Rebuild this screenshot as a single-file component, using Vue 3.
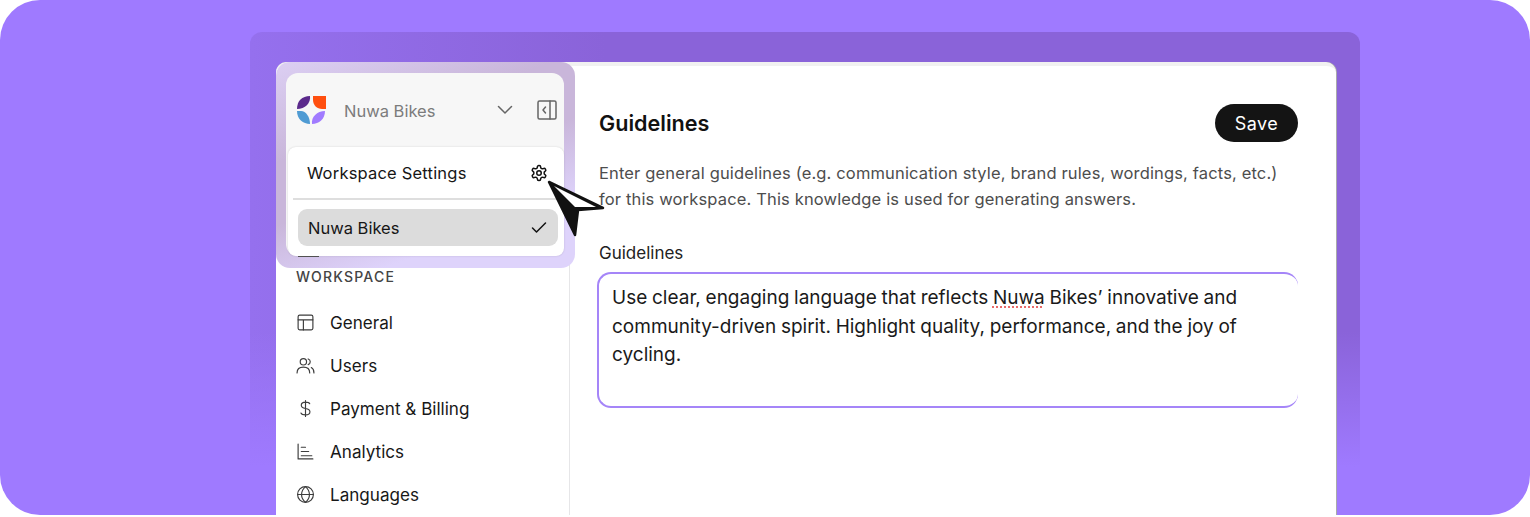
<template>
  <div class="stage">
    <div class="frame">
      <div class="window">
        <aside class="sidebar">
          <div class="side-head"></div>
          <div class="side-label">WORKSPACE</div>
          <nav class="side-nav">
            <div v-for="item in navItems" :key="item.label" class="nav-item">
              <svg class="nav-icon" viewBox="0 0 18 18" fill="none" stroke="#3d3d3d" stroke-width="1.1" stroke-linecap="round" stroke-linejoin="round" v-html="item.icon"></svg>
              <span>{{ item.label }}</span>
            </div>
          </nav>
        </aside>
        <main class="content">
          <div class="title-row">
            <h1>Guidelines</h1>
            <button class="save" type="button">Save</button>
          </div>
          <p class="hint">Enter general guidelines (e.g. communication style, brand rules, wordings, facts, etc.) for this workspace. This knowledge is used for generating answers.</p>
          <label class="field-label">Guidelines</label>
          <div class="editor">Use clear, engaging language that reflects <span class="typo">Nuwa</span> Bikes’ innovative and community-driven spirit. Highlight quality, performance, and the joy of cycling.</div>
        </main>
      </div>
    </div>

    <div class="highlight">
      <div class="peek"></div>
      <div class="switcher">
        <div class="brand-row">
          <svg class="logo" width="30" height="30" viewBox="0 0 30 30">
            <path d="M1 14C1 6 6 1 14 1 15 8 9 14 1 14z" fill="#5b2a8c" />
            <path d="M17 1H30V14H26C21 14 17 10 17 5z" fill="#ff4f0f" />
            <path d="M1 16H5C10 16 14 22 14 29 7 29 1 24 1 16z" fill="#4f9bd3" />
            <path d="M29 16C21 16 15 22 16 29 23 29 29 24 29 16z" fill="#a17bff" />
          </svg>
          <span class="brand-name">Nuwa Bikes</span>
          <svg class="chevron" width="16" height="10" viewBox="0 0 16 10" fill="none" stroke="#666" stroke-width="1.500" stroke-linecap="round" stroke-linejoin="round"><path d="M1.500 1.500 8 8l6.500-6.500" /></svg>
          <svg class="collapse" width="20" height="20" viewBox="0 0 20 20" fill="none" stroke="#666" stroke-width="1.500" stroke-linejoin="round" stroke-linecap="round"><rect x="1" y="1" width="18" height="18" rx="1.500" /><path d="M13 1v18M8.500 7 6 10l2.500 3" /></svg>
        </div>
        <div class="menu">
          <div class="menu-row">
            <span>Workspace Settings</span>
            <svg width="18" height="18" viewBox="0 0 24 24" fill="none" stroke="#111" stroke-width="2" stroke-linecap="round" stroke-linejoin="round"><path d="M12.220 2h-.44a2 2 0 0 0-2 2v.18a2 2 0 0 1-1 1.730l-.43.25a2 2 0 0 1-2 0l-.15-.08a2 2 0 0 0-2.730.73l-.22.38a2 2 0 0 0 .73 2.730l.15.1a2 2 0 0 1 1 1.720v.51a2 2 0 0 1-1 1.740l-.15.09a2 2 0 0 0-.73 2.730l.22.38a2 2 0 0 0 2.730.73l.15-.08a2 2 0 0 1 2 0l.43.25a2 2 0 0 1 1 1.730V20a2 2 0 0 0 2 2h.44a2 2 0 0 0 2-2v-.18a2 2 0 0 1 1-1.730l.43-.25a2 2 0 0 1 2 0l.15.08a2 2 0 0 0 2.730-.73l.22-.39a2 2 0 0 0-.73-2.730l-.15-.08a2 2 0 0 1-1-1.740v-.5a2 2 0 0 1 1-1.740l.15-.09a2 2 0 0 0 .73-2.730l-.22-.38a2 2 0 0 0-2.730-.73l-.15.08a2 2 0 0 1-2 0l-.43-.25a2 2 0 0 1-1-1.730V4a2 2 0 0 0-2-2z" /><circle cx="12" cy="12" r="3" /></svg>
          </div>
          <div class="menu-selected">
            <span>Nuwa Bikes</span>
            <svg width="16" height="13" viewBox="0 0 16 13" fill="none" stroke="#111" stroke-width="1.500" stroke-linecap="round" stroke-linejoin="round"><path d="M1.500 7 5.500 11 14.500 2" /></svg>
          </div>
        </div>
      </div>
    </div>

    <svg class="cursor" width="60" height="60" viewBox="0 0 60 60">
      <path d="M2 2 56 28 31 30 28 55z" fill="#111" stroke="#111" stroke-width="2.500" stroke-linejoin="round" />
      <path d="M7 6 49 27 28 27z" fill="#fff" />
    </svg>
  </div>
</template>

<script setup>
const navItems = [
  {
    label: "General",
    icon: '<rect x="2" y="2" width="14" height="14" rx="1.500"/><path d="M2 6.500h14M7 6.500V16"/>',
  },
  {
    label: "Users",
    icon: '<circle cx="7" cy="5.500" r="3"/><path d="M1 16c0-3.500 2.500-5.500 6-5.500s6 2 6 5.500M11.500 2.800c1.500.5 2 1.500 2 2.700s-.6 2.200-2 2.700M14.500 11c1.500.8 2.500 2.500 2.500 5"/>',
  },
  {
    label: "Payment & Billing",
    icon: '<path d="M9 1.500v15M13 4.500c-.5-1-2-1.500-4-1.500-2.500 0-4 1.200-4 3s1.500 2.600 4 3 4.200 1.300 4.200 3.100-1.700 3-4.200 3c-2.200 0-3.800-.6-4.300-1.800"/>',
  },
  {
    label: "Analytics",
    icon: '<path d="M2 2v14h14M5 5h4M5 9h7M5 13h10"/>',
  },
  {
    label: "Languages",
    icon: '<circle cx="9" cy="9" r="7.500"/><path d="M1.500 9h15M9 1.500c-5 4.500-5 10.500 0 15M9 1.500c5 4.500 5 10.500 0 15"/>',
  },
];
</script>

<style>
html,
body {
  background: #fff;
  overflow: hidden;
}
</style>

<style scoped>
.stage {
  position: relative;
  width: 1530px;
  height: 515px;
  padding: 32px 170px 0 250px;
  box-sizing: border-box;
  background: #9f7aff;
  border-radius: 40px;
  overflow: hidden;
  font-family: Inter, "Liberation Sans", sans-serif;
  color: #111;
}

.frame {
  height: 100%;
  padding: 30px 24px 0 26px;
  box-sizing: border-box;
  border-radius: 12px 12px 0 0;
  background:
    linear-gradient(to bottom, rgba(159, 122, 255, 0) 0, rgba(159, 122, 255, 0) 62%, #9f7aff 90%),
    linear-gradient(to right, #9570ee 0, #8a63d9 32%);
}

.window {
  display: flex;
  height: 100%;
  background: #fff;
  border-top: 4px solid #f1f1f1;
  border-radius: 10px 10px 0 0;
  box-shadow: 1px 0 0 #aaa;
  box-sizing: border-box;
  overflow: hidden;
}

.sidebar {
  width: 294px;
  flex: none;
  border-right: 1px solid #e6e6e8;
  box-sizing: border-box;
  padding-left: 20px;
}

.side-head {
  height: 202px;
}

.side-label {
  font-size: 14px;
  font-weight: 500;
  letter-spacing: 1.2px;
  color: #444;
  line-height: 17px;
}

.side-nav {
  margin-top: 24px;
  display: flex;
  flex-direction: column;
  gap: 17px;
}

.nav-item {
  display: flex;
  align-items: center;
  gap: 15px;
  height: 26px;
  font-size: 17.100px;
  color: #181818;
}

.nav-icon {
  width: 19px;
  height: 19px;
  flex: none;
}

.content {
  flex: 1;
  padding: 38px 38px 0 29px;
  min-width: 0;
}

.title-row {
  display: flex;
  justify-content: space-between;
  align-items: center;
}

.title-row h1 {
  margin: 0;
  font-size: 21.600px;
  font-weight: 600;
  color: #111;
}

.save {
  width: 83px;
  height: 38px;
  border: none;
  border-radius: 19px;
  background: #141414;
  color: #fff;
  font-family: inherit;
  font-size: 18px;
  letter-spacing: 0.4px;
}

.hint {
  margin: 19px 0 0;
  font-size: 16.500px;
  line-height: 25.500px;
  color: #4d4d4d;
  letter-spacing: 0.15px;
}

.field-label {
  display: block;
  margin-top: 31px;
  font-size: 17px;
  line-height: 20px;
  color: #222;
}

.editor {
  margin: 9px 0 0 -2px;
  height: 136px;
  padding: 10px 50px 0 13px;
  box-sizing: border-box;
  border: 2px solid #a585f8;
  border-right: 0;
  border-radius: 14px;
  font-size: 19px;
  word-spacing: -0.6px;
  line-height: 28.600px;
  color: #1a1a1a;
}

.typo {
  text-decoration: underline dotted #e96a6a;
  text-underline-offset: 3px;
}

.highlight {
  position: absolute;
  left: 276px;
  top: 62px;
  width: 299px;
  height: 206px;
  padding: 11px 11px 12px 10px;
  box-sizing: border-box;
  border-radius: 14px;
  background: linear-gradient(160deg, #dccff3 0, #c9b6da 32%, #c9b6da 52%, #ded3fb 78%);
}

.peek {
  position: absolute;
  left: 22px;
  top: 193px;
  width: 21px;
  height: 2px;
  background: #555;
}

.switcher {
  position: relative;
  height: 100%;
  border-radius: 12px;
  background: #f7f7f7;
  display: flex;
  flex-direction: column;
}

.brand-row {
  height: 74px;
  display: flex;
  align-items: center;
  padding: 0 7px 0 10px;
  flex: none;
}

.logo {
  flex: none;
}

.brand-name {
  margin: 2px 0 0 18px;
  font-size: 16.500px;
  color: #7c7c7c;
  flex: 1;
}

.chevron {
  margin-right: 24px;
}

.menu {
  flex: 1;
  margin-left: 2px;
  background: #fff;
  border-radius: 8px;
  box-shadow: 0 0 2px rgba(0, 0, 0, 0.16);
  padding: 0 6px 0 10px;
}

.menu-row {
  height: 51px;
  margin: 0 -6px 0 -5px;
  padding: 0 16px 0 14px;
  display: flex;
  align-items: center;
  justify-content: space-between;
  font-size: 16.500px;
  color: #161616;
  border-bottom: 2px solid #dedede;
  letter-spacing: 0.2px;
}

.menu-selected {
  margin-top: 9px;
  height: 37px;
  padding: 0 11px 0 10px;
  display: flex;
  align-items: center;
  justify-content: space-between;
  background: #dcdcdc;
  border-radius: 9px;
  font-size: 16.500px;
  color: #161616;
}

.cursor {
  position: absolute;
  left: 547px;
  top: 180px;
}
</style>
